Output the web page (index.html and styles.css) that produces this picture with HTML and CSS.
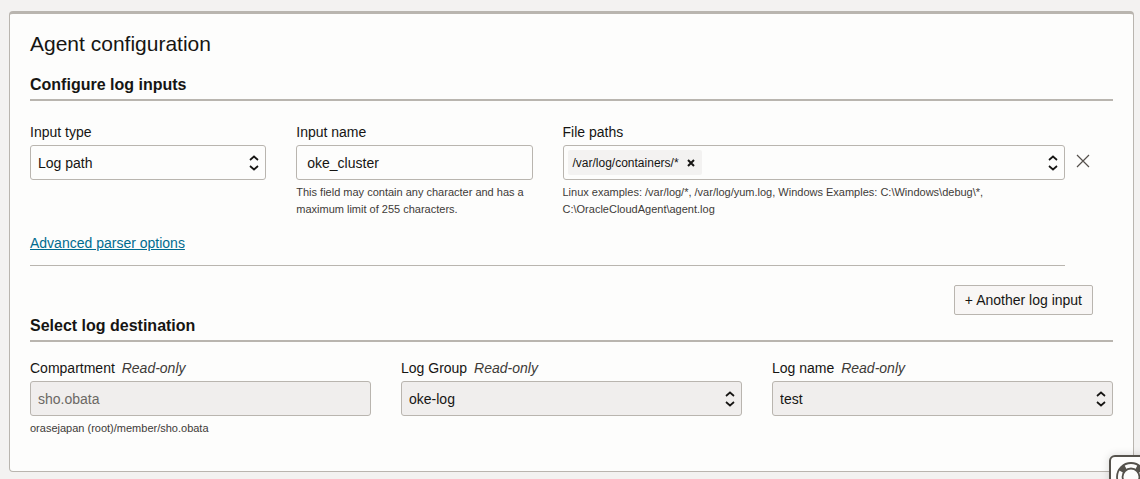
FILE: index.html
```html
<!DOCTYPE html>
<html lang="en">
<head>
<meta charset="utf-8">
<meta name="viewport" content="width=device-width, initial-scale=1">
<title>Agent configuration</title>
<link rel="stylesheet" href="styles.css">
</head>
<body>
<main class="card">
  <h1 class="card-title">Agent configuration</h1>

  <section>
    <h2 class="section-title">Configure log inputs</h2>
    <div class="input-row">
      <div class="input-body">
        <div class="input-grid">
          <div class="field">
            <label class="label" for="input-type">Input type</label>
            <div class="select-wrap">
              <select class="control" id="input-type"><option>Log path</option></select>
              <svg class="arrows" viewBox="0 0 10 16" aria-hidden="true"><path d="M1 5 5 1.500 9 5M1 11 5 14.500 9 11"/></svg>
            </div>
          </div>
          <div class="field">
            <label class="label" for="input-name">Input name</label>
            <input class="control control-text" id="input-name" type="text" value="oke_cluster" aria-describedby="name-help">
            <p class="help" id="name-help">This field may contain any character and has a maximum limit of 255 characters.</p>
          </div>
          <div class="field field-wide">
            <label class="label" for="file-paths">File paths</label>
            <div class="select-wrap">
              <div class="control tags">
                <span class="tag">/var/log/containers/*
                  <button class="tag-remove" type="button" aria-label="Remove path"><svg viewBox="0 0 8 8" aria-hidden="true"><path d="M1 1 7 7M7 1 1 7"/></svg></button>
                </span>
                <input class="tag-input" id="file-paths" type="text" aria-describedby="path-help">
              </div>
              <svg class="arrows" viewBox="0 0 10 16" aria-hidden="true"><path d="M1 5 5 1.500 9 5M1 11 5 14.500 9 11"/></svg>
            </div>
            <p class="help" id="path-help">Linux examples: /var/log/*, /var/log/yum.log, Windows Examples: C:\Windows\debug\*, C:\OracleCloudAgent\agent.log</p>
          </div>
        </div>
        <div class="advanced"><a class="link" href="#">Advanced parser options</a></div>
      </div>
      <button class="row-remove" type="button" aria-label="Remove log input"><svg viewBox="0 0 14 14" aria-hidden="true"><path d="M1 1 13 13M13 1 1 13"/></svg></button>
    </div>
    <div class="actions"><button class="add-button" type="button">+ Another log input</button></div>
  </section>

  <section>
    <h2 class="section-title">Select log destination</h2>
    <div class="destination-grid">
      <div class="field">
        <label class="label" for="compartment">Compartment <em class="read-only">Read-only</em></label>
        <input class="control control-readonly control-muted" id="compartment" type="text" value="sho.obata" readonly>
        <p class="help">orasejapan (root)/member/sho.obata</p>
      </div>
      <div class="field">
        <label class="label" for="log-group">Log Group <em class="read-only">Read-only</em></label>
        <div class="select-wrap">
          <select class="control control-readonly" id="log-group"><option>oke-log</option></select>
          <svg class="arrows" viewBox="0 0 10 16" aria-hidden="true"><path d="M1 5 5 1.500 9 5M1 11 5 14.500 9 11"/></svg>
        </div>
      </div>
      <div class="field">
        <label class="label" for="log-name">Log name <em class="read-only">Read-only</em></label>
        <div class="select-wrap">
          <select class="control control-readonly" id="log-name"><option>test</option></select>
          <svg class="arrows" viewBox="0 0 10 16" aria-hidden="true"><path d="M1 5 5 1.500 9 5M1 11 5 14.500 9 11"/></svg>
        </div>
      </div>
    </div>
  </section>
</main>

<button class="support" type="button" aria-label="Support">
  <svg viewBox="0 0 32 32" aria-hidden="true">
    <circle class="ring" cx="16" cy="16" r="14"/>
    <circle class="ring" cx="16" cy="16" r="8.500"/>
    <circle class="bands" cx="16" cy="16" r="11.300" pathLength="80"/>
  </svg>
</button>
</body>
</html>
```

FILE: styles.css
```css
* { box-sizing: border-box; }

body {
  margin: 0;
  padding: 11px 6px 7px 9px;
  background: #f3f2f1;
  color: #161513;
  font: 14px/20px "Liberation Sans", Arial, sans-serif;
}

button, input, select { font: inherit; color: inherit; margin: 0; }
svg { display: block; fill: none; stroke: currentColor; }

.card {
  padding: 18px 20px 34px;
  background: #fdfdfc;
  border: 1px solid #b9b5af;
  border-top-width: 3px;
  border-radius: 4px;
}

.card-title { margin: 0 0 18px; font-size: 21px; line-height: 24px; font-weight: 400; }

.section-title {
  margin: 0;
  padding-bottom: 3px;
  border-bottom: 2px solid #b9b5af;
  font-size: 16px;
  line-height: 22px;
}

.input-row { display: grid; grid-template-columns: 1fr 48px; padding-top: 21px; }
.input-body { border-bottom: 1px solid #b9b5af; }
.input-grid { display: grid; grid-template-columns: repeat(4, 1fr); gap: 30px; }
.destination-grid { display: grid; grid-template-columns: repeat(3, 1fr); gap: 30px; padding-top: 16px; }

.field { min-width: 0; }
.field-wide { grid-column: span 2; }
.label { display: block; margin-bottom: 3px; }
.read-only { margin-left: 3px; color: #3e3b38; }

.control {
  display: block;
  width: 100%;
  height: 35px;
  padding: 0 8px;
  border: 1px solid #b9b5af;
  border-radius: 3px;
  background: #fdfdfc;
  appearance: none;
}
.control-text { padding: 0 10px; }
.control-readonly { background: #f0eeed; }
.control-muted { color: #6b6864; padding: 0 7px; }
select.control { padding: 0 24px 0 7px; }

.select-wrap { position: relative; }
.arrows {
  position: absolute;
  top: 10px;
  right: 7px;
  width: 10px;
  height: 16px;
  stroke-width: 1.7;
  pointer-events: none;
}

.tags { display: flex; align-items: center; padding: 0 24px 0 4px; }
.tag {
  display: flex;
  align-items: center;
  gap: 6px;
  height: 25px;
  padding: 0 5px;
  border-radius: 2px;
  background: #f3f2f1;
  font-size: 12px;
  white-space: nowrap;
}
.tag-remove { padding: 2px; border: 0; background: none; }
.tag-remove svg { width: 8px; height: 8px; stroke-width: 2; }
.tag-input { flex: 1; min-width: 0; border: 0; background: none; outline: 0; }

.help { margin: 4px 0 0; font-size: 11px; line-height: 17px; color: #3e3b38; }

.advanced { padding: 15px 0 12px; }
.link { color: #006b8f; text-decoration: underline; }

.row-remove {
  align-self: start;
  justify-self: start;
  margin: 28px 0 0 7px;
  padding: 4px;
  border: 0;
  background: none;
  color: #55504c;
}
.row-remove svg { width: 14px; height: 14px; stroke-width: 1.2; }

.actions { display: flex; justify-content: flex-end; padding: 19px 20px 0 0; }
.add-button {
  height: 30px;
  padding: 0 10px;
  border: 1px solid #b9b5af;
  border-radius: 2px;
  background: #f8f6f5;
}

.support {
  position: fixed;
  right: -13px;
  bottom: -20px;
  width: 44px;
  height: 44px;
  padding: 4px;
  border: 2px solid #55524c;
  border-radius: 6px;
  background: #fdfdfc;
  color: #55524c;
  box-shadow: 0 0 8px rgba(0, 0, 0, 0.15);
}
.support svg { width: 32px; height: 32px; }
.ring { stroke-width: 1.8; }
.bands { stroke-width: 6; stroke-dasharray: 7 13; stroke-dashoffset: -6.5; }
```
